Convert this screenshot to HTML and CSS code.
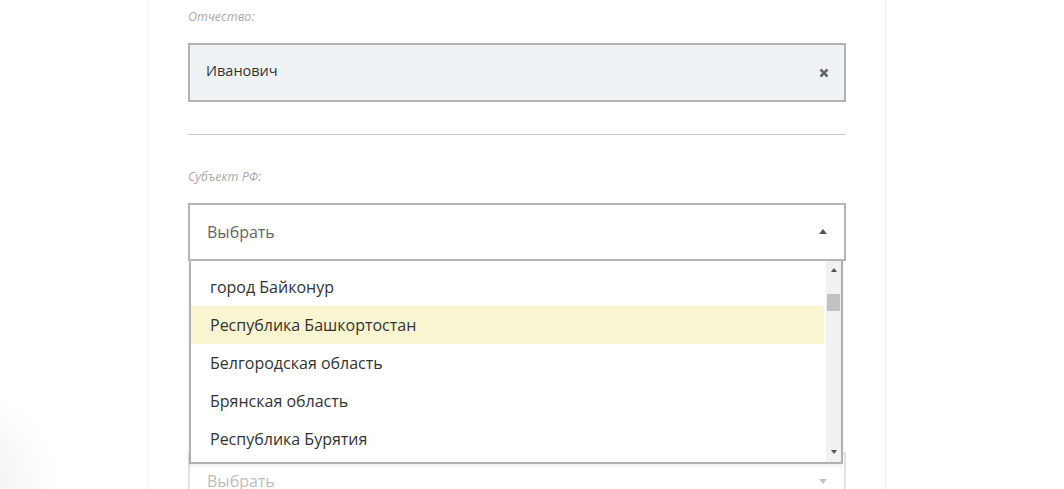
FILE: index.html
```html
<!DOCTYPE html>
<html lang="ru">
<head>
<meta charset="utf-8">
<title>Форма</title>
<link rel="stylesheet" href="styles.css">
</head>
<body>
<div class="page">
  <div class="card">
    <div class="field">
      <label class="label">Отчество:</label>
      <div class="input filled">
        <span class="value">Иванович</span>
        <svg class="clear" width="10" height="10" viewBox="0 0 10 10"><path d="M1.5 1.5 L8.5 8.5 M8.5 1.5 L1.5 8.5" stroke="#666" stroke-width="2.6" stroke-linecap="butt"/></svg>
      </div>
    </div>
    <hr class="divider">
    <div class="field">
      <label class="label">Субъект РФ:</label>
      <div class="select-wrap">
        <div class="select open">
          <span class="placeholder">Выбрать</span>
          <span class="caret caret-up"></span>
        </div>
        <div class="dropdown">
          <ul class="options">
            <li class="option">город Байконур</li>
            <li class="option active">Республика Башкортостан</li>
            <li class="option">Белгородская область</li>
            <li class="option">Брянская область</li>
            <li class="option">Республика Бурятия</li>
          </ul>
          <div class="scrollbar">
            <div class="sb-btn"><span class="sb-arrow up"></span></div>
            <div class="sb-track"><div class="sb-thumb"></div></div>
            <div class="sb-btn"><span class="sb-arrow down"></span></div>
          </div>
        </div>
      </div>
    </div>
    <div class="field next">
      <div class="select disabled">
        <span class="placeholder">Выбрать</span>
        <span class="caret caret-down"></span>
      </div>
    </div>
  </div>
</div>
</body>
</html>
```
FILE: styles.css
```css
* { box-sizing: border-box; }
html, body { margin: 0; padding: 0; }
body {
  height: 489px;
  overflow: hidden;
  background: radial-gradient(circle at -30px 480px, rgba(0,0,0,0.06), rgba(0,0,0,0) 90px), #ffffff;
  font-family: "Open Sans", "Noto Sans", sans-serif;
}
.page {
  padding-left: 147px;
}
.card {
  width: 739px;
  height: 489px;
  background: #fff;
  border-left: 1px solid #efefef;
  border-right: 1px solid #efefef;
  padding: 9px 39px 0 40px;
}
.field { position: relative; }
.label {
  display: block;
  height: 16px;
  line-height: 16px;
  font-size: 12.5px;
  font-style: italic;
  color: #a9a9a9;
  margin-bottom: 18px;
}
.input {
  height: 59px;
  border: 2px solid #b3b3b3;
  background: #eef2f5;
  display: flex;
  align-items: center;
  justify-content: space-between;
  padding: 0 15px 0 16px;
}
.value {
  font-size: 14.5px;
  color: #333;
  line-height: 20px;
  margin-top: -3px;
}
.clear { display: block; margin-top: 1px; }
.divider {
  margin: 32px 0 34px;
  border: 0;
  border-top: 1px solid #c8c8c8;
  height: 0;
}
.field .label + .select-wrap { margin-top: 1px; }
.select-wrap { position: relative; }
.select {
  height: 58px;
  border: 2px solid #b5b5b5;
  background: #fff;
  display: flex;
  align-items: center;
  justify-content: space-between;
  padding: 0 17px 0 17px;
}
.placeholder {
  font-size: 16px;
  color: #666;
  line-height: 22px;
}
.caret {
  width: 0;
  height: 0;
  border-left: 4.5px solid transparent;
  border-right: 4.5px solid transparent;
}
.caret-up { border-bottom: 5px solid #555; margin-top: -2px; }
.caret-down { border-top: 5px solid #c4c4c4; }
.dropdown {
  position: absolute;
  top: 100%;
  left: 1px;
  width: 654px;
  height: 203px;
  background: #fff;
  border: 2px solid #b0b0b0;
  border-top: 0;
  box-shadow: 0 2px 3px rgba(0,0,0,0.08);
  display: flex;
  z-index: 5;
}
.options {
  list-style: none;
  margin: 0;
  padding: 7px 2px 4px 0;
  flex: 1;
}
.option {
  height: 38px;
  line-height: 38px;
  padding-left: 19px;
  font-size: 16px;
  color: #333;
  white-space: nowrap;
}
.option.active {
  background: #faf5d1;
  border-radius: 0 3px 3px 0;
}
.scrollbar {
  width: 15px;
  background: #f1f1f1;
  display: flex;
  flex-direction: column;
}
.sb-btn {
  height: 17px;
  display: flex;
  align-items: center;
  justify-content: center;
}
.sb-arrow {
  width: 0;
  height: 0;
  border-left: 3.5px solid transparent;
  border-right: 3.5px solid transparent;
}
.sb-arrow.up { border-bottom: 4px solid #505050; margin-top: 1px; }
.sb-arrow.down { border-top: 4px solid #505050; margin-top: -3px; }
.sb-track { flex: 1; padding: 16px 1px 0; }
.sb-thumb { height: 17px; background: #c1c1c1; }
.field.next { margin-top: 191px; }
.select.disabled { border-color: #e2e2e2; }
.select.disabled .placeholder { color: #bdbdbd; }
```
